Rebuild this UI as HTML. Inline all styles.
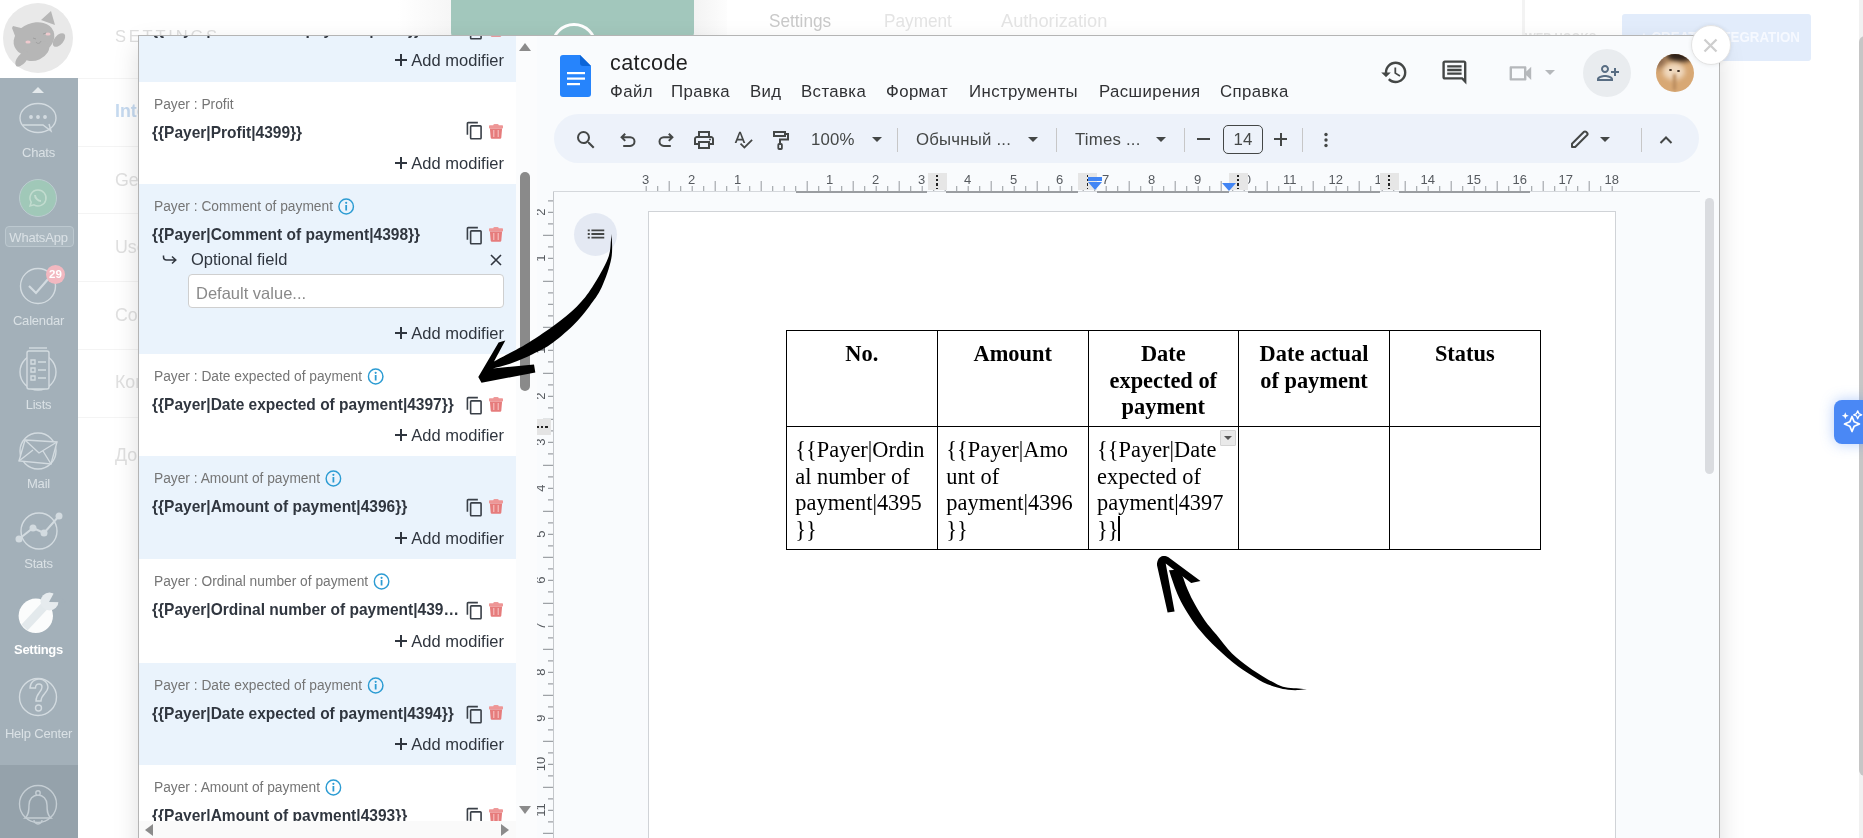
<!DOCTYPE html>
<html lang="en"><head><meta charset="utf-8"><title>catcode</title>
<style>
html,body{margin:0;padding:0}
body{width:1863px;height:838px;overflow:hidden;position:relative;background:#fff;font-family:"Liberation Sans",sans-serif}
.abs{position:absolute}
#side{position:absolute;left:0;top:78px;width:78px;height:760px;background:#a3b0b9}
#side2{position:absolute;left:0;top:765px;width:78px;height:73px;background:#95a2ab}
.sl{position:absolute;left:0;width:77px;text-align:center;color:#dae1e5;font-size:13px;letter-spacing:-.2px;white-space:nowrap;line-height:16px}
#modal{position:absolute;left:138px;top:35px;width:1582px;height:820px;background:#fff;border:1px solid #b4b4b4;box-sizing:border-box;box-shadow:0 10px 24px rgba(0,0,0,.13)}
#left{will-change:transform;position:absolute;left:139px;top:36px;width:377px;height:785px;overflow:hidden;background:#fff}
.row{position:absolute;left:0;width:377px}
.row.b{background:#eaf3fc}
.lab{position:absolute;left:15px;font-size:14px;color:#757575;white-space:nowrap;transform-origin:0 0;transform:scaleX(.983);line-height:16px}
.lab .inf{position:absolute;right:-22px;top:0px}
.code{position:absolute;left:13px;font-size:16.5px;font-weight:bold;color:#30363f;white-space:nowrap;transform-origin:0 0;transform:scaleX(.94);line-height:19px}
.add{position:absolute;right:12px;font-size:16.5px;color:#30363f;white-space:nowrap;bottom:11.5px;line-height:19px}
.add .pl{position:absolute;left:-16px;top:3px}
.cpw{position:absolute;left:326px;top:42.2px}
.trw{position:absolute;left:350.2px;top:42.8px}
.optarrow{position:absolute;left:23px;top:69.5px}
.opt{position:absolute;left:52px;top:66px;font-size:16.5px;color:#30363f;line-height:19px;white-space:nowrap}
.optx{position:absolute;left:351px;top:70px}
.inp{position:absolute;left:49px;top:90px;width:314px;height:32px;border:1px solid #cfcfcf;border-radius:4px;background:#fff}
.inp span{position:absolute;left:7px;top:8.500px;font-size:16.5px;color:#8a8a8a;line-height:19px;white-space:nowrap}
#docs{will-change:transform;position:absolute;left:537px;top:36px;width:1182px;height:802px;background:#f9fbfd;overflow:hidden}
#dw{position:absolute;left:-537px;top:-36px;width:1863px;height:838px}
.ttl{letter-spacing:.37px;font-size:21.6px;color:#1f1f1f;line-height:26px;white-space:nowrap}
.mn{letter-spacing:.4px;top:82px;font-size:16.8px;color:#303134;line-height:20px;white-space:nowrap}
.tt{letter-spacing:.2px;top:130.300px;font-size:16.8px;color:#444746;line-height:20px;white-space:nowrap}
.sep{top:128px;width:1px;height:24px;background:#c7c7c7}
.car{top:137px;width:0;height:0;border-left:5px solid transparent;border-right:5px solid transparent;border-top:5px solid #444746}
.rn{top:172px;width:30px;text-align:center;font-size:13px;color:#565a5f;line-height:16px}
.vn{left:532px;width:18px;height:16px;text-align:center;font-size:13px;color:#565a5f;line-height:16px;transform:rotate(-90deg)}
.cm{top:173px;width:19px;height:17px;background:#e6e6e6}
.cm i{position:absolute;left:8.700px;top:2px;height:14px;width:1.600px;background:repeating-linear-gradient(#222 0 2.200px,transparent 2.200px 4.200px)}
.tri{width:0;height:0;border-left:7px solid transparent;border-right:7px solid transparent;border-top:8px solid #4285f4}
.th{font-family:"Liberation Serif",serif;font-weight:bold;font-size:22.4px;line-height:26.4px;text-align:center;color:#000;white-space:nowrap}
.td{font-family:"Liberation Serif",serif;font-size:22.4px;line-height:26.5px;color:#000;white-space:nowrap}
.fz{font-size:18.5px;color:#c9c9c9;line-height:22px;white-space:nowrap;transform-origin:0 0;transform:scaleX(.93)}
</style></head><body>
<div id="bg" style="position:absolute;left:0;top:0;width:1863px;height:838px;will-change:transform">
<div class="abs" style="left:451px;top:-6px;width:243px;height:44px;border-radius:5px;background:#a2c7bc"></div>
<div class="abs" style="left:551px;top:23px;width:40px;height:40px;border-radius:50%;border:3px solid #fff"></div>
<div class="abs" style="left:398px;top:0;width:53px;height:36px;background:linear-gradient(90deg,#fff,#f6f6f6)"></div>
<div class="abs" style="left:694px;top:0;width:33px;height:36px;background:linear-gradient(90deg,#f3f3f3,#fdfdfd)"></div>
<div class="abs fz" style="left:769px;top:10px">Settings</div>
<div class="abs fz" style="left:884px;top:10px;color:#e4e4e4">Payment</div>
<div class="abs fz" style="left:1001px;top:10px;color:#e4e4e4;transform:scaleX(.985)">Authorization</div>
<div class="abs" style="left:115px;top:27px;font-size:16.500px;letter-spacing:2.800px;color:#dedede">SETTINGS</div>
<div class="abs" style="left:115px;top:100px;font-size:17.800px;color:#c6daf0;line-height:22px;white-space:nowrap;font-weight:bold;">Integrations</div>
<div class="abs" style="left:115px;top:169px;font-size:17.800px;color:#e0e0e0;line-height:22px;white-space:nowrap;">General</div>
<div class="abs" style="left:115px;top:236px;font-size:17.800px;color:#e0e0e0;line-height:22px;white-space:nowrap;">Users</div>
<div class="abs" style="left:115px;top:304px;font-size:17.800px;color:#e0e0e0;line-height:22px;white-space:nowrap;">Contacts</div>
<div class="abs" style="left:115px;top:371px;font-size:17.800px;color:#e0e0e0;line-height:22px;white-space:nowrap;">Конструктор</div>
<div class="abs" style="left:115px;top:444px;font-size:17.800px;color:#e0e0e0;line-height:22px;white-space:nowrap;">Дополнительно</div>
<div class="abs" style="left:78px;top:78px;width:60px;height:1px;background:#f4f4f4"></div>
<div class="abs" style="left:78px;top:146px;width:60px;height:1px;background:#f4f4f4"></div>
<div class="abs" style="left:78px;top:213px;width:60px;height:1px;background:#f4f4f4"></div>
<div class="abs" style="left:78px;top:281px;width:60px;height:1px;background:#f4f4f4"></div>
<div class="abs" style="left:78px;top:349px;width:60px;height:1px;background:#f4f4f4"></div>
<div class="abs" style="left:78px;top:417px;width:60px;height:1px;background:#f4f4f4"></div>
<div class="abs" style="left:1522px;top:0;width:3px;height:36px;background:#f3f3f3"></div>
<div class="abs" style="left:1622px;top:14px;width:189px;height:47px;border-radius:3px;background:#e2ecfb"></div>
<div class="abs" style="left:1640px;top:28.500px;font-size:14.700px;font-weight:bold;color:#f6f9ff;white-space:nowrap;transform-origin:0 0;transform:scaleX(.908);line-height:17px">+ CREATE INTEGRATION</div>
<div class="abs" style="left:1525px;top:29px;font-size:13.500px;font-weight:bold;color:#e6e6e6;white-space:nowrap;transform-origin:0 0;transform:scaleX(.84);line-height:17px">WEB HOOKS</div>
<div id="side"></div><div id="side2"></div>
<div class="abs" style="left:3px;top:3px;width:70px;height:70px;border-radius:50%;background:#e9e9e9"></div>
<svg class="abs" style="left:3px;top:3px" width="70" height="70" viewBox="0 0 70 70"><g fill="#b6b6b6"><ellipse cx="31" cy="36" rx="21" ry="16" transform="rotate(-22 31 36)"/><path d="M9 25l1-2 12 3-8 12zM38 17l10-9 4 14z"/><ellipse cx="33" cy="48" rx="14" ry="9" transform="rotate(-25 33 48)"/><ellipse cx="56" cy="37" rx="8" ry="4.500" transform="rotate(-50 56 37)"/><ellipse cx="19" cy="56" rx="9" ry="4.500" transform="rotate(-50 19 56)"/></g><ellipse cx="25" cy="39" rx="2.600" ry="1.600" fill="#efc9cd"/><ellipse cx="45" cy="31" rx="2.600" ry="1.600" fill="#efc9cd"/><path d="M30 35l3 1M40 31l3-1M33 39c1 2 4 2 5-1" stroke="#999" stroke-width=".8" fill="none"/></svg>
<div class="abs" style="left:32px;top:87px;width:0;height:0;border-left:6px solid transparent;border-right:6px solid transparent;border-bottom:6px solid #e4e9ec"></div>
<svg class="abs" style="left:17px;top:98px" width="42" height="42" viewBox="0 0 42 42" fill="none" stroke="#d3dbe0" stroke-width="1.400"><ellipse cx="21" cy="20" rx="18" ry="14.500"/><path d="M6 27h20l8 6-2-7"/><circle cx="14" cy="19" r="1.200" fill="#d3dbe0"/><circle cx="21" cy="19" r="1.200" fill="#d3dbe0"/><circle cx="28" cy="19" r="1.200" fill="#d3dbe0"/></svg>
<div class="sl" style="top:145px;">Chats</div>
<div class="abs" style="left:19px;top:179px;width:36px;height:36px;border-radius:50%;background:#a0c8b8;border:1.500px solid #bccdd0"></div>
<svg class="abs" style="left:27px;top:187px" width="22" height="22" viewBox="0 0 22 22" fill="none" stroke="#c2dccf" stroke-width="1.500"><path d="M11 3a8 8 0 0 0-6.800 12.200L3 19l4-1.100A8 8 0 1 0 11 3z"/><path d="M8 8c0 3 3 6 6 6" stroke-width="2"/></svg>
<div class="abs" style="left:4.500px;top:226px;width:67px;height:19px;border:1px solid #bcc8cf;border-radius:4px;background:#abb8c0"></div>
<div class="sl" style="top:230px;">WhatsApp</div>
<svg class="abs" style="left:19px;top:267px" width="38" height="38" viewBox="0 0 38 38" fill="none" stroke="#d3dbe0" stroke-width="1.400"><circle cx="19" cy="19" r="17.500"/><path d="M10 19l7 7 13-15" stroke-width="2.200"/></svg>
<div class="abs" style="left:46px;top:265px;width:19px;height:19px;border-radius:50%;background:#f2b8c0;color:#fff;font-size:11.500px;font-weight:bold;text-align:center;line-height:19px">29</div>
<div class="sl" style="top:313px;">Calendar</div>
<svg class="abs" style="left:18px;top:346px" width="40" height="50" viewBox="0 0 40 50" fill="none" stroke="#d3dbe0" stroke-width="1.400"><circle cx="20" cy="26" r="18"/><rect x="9" y="5" width="22" height="38" rx="2" fill="#a3b0b9"/><path d="M11 2h18"/><path d="M13 14h4v4h-4zM13 22h4v4h-4zM13 30h4v4h-4zM20 16h8M20 24h8M20 32h8"/></svg>
<div class="sl" style="top:397px;">Lists</div>
<svg class="abs" style="left:17px;top:430px" width="44" height="42" viewBox="0 0 44 42" fill="none" stroke="#d3dbe0" stroke-width="1.400"><circle cx="21" cy="21" r="18"/><path d="M8 10l32 2-6 22-32-3z" fill="#a3b0b9"/><path d="M8 10l14 13 18-11M2 31l14-11M34 34l-8-13"/></svg>
<div class="sl" style="top:476px;">Mail</div>
<svg class="abs" style="left:14px;top:508px" width="50" height="44" viewBox="0 0 50 44" fill="none" stroke="#d3dbe0" stroke-width="1.400"><circle cx="25" cy="23" r="18"/><path d="M5 31l14-11 11 5 15-17" stroke-width="2"/><circle cx="5" cy="31" r="2.800" fill="#d3dbe0"/><circle cx="19" cy="20" r="2.800" fill="#d3dbe0"/><circle cx="30" cy="25" r="2.800" fill="#d3dbe0"/><circle cx="45" cy="8" r="2.800" fill="#d3dbe0"/></svg>
<div class="sl" style="top:556px;">Stats</div>
<svg class="abs" style="left:0;top:580px" width="78" height="60" viewBox="0 0 78 60"><circle cx="35.800" cy="35.800" r="17.200" fill="#fbfcfc"/><path d="M21.500 44.500L42 22.500l6.500 5.500L27.500 50.500z" fill="#e3e9ec"/><circle cx="49.500" cy="21.500" r="9" fill="#e6ebee"/><path d="M49 22l4.500-12 12 10z" fill="#a3b0b9" transform="rotate(8 49 22)"/></svg>
<div class="sl" style="top:641.5px;color:#fff;font-weight:bold;font-size:13px;letter-spacing:-.3px">Settings</div>
<svg class="abs" style="left:17px;top:674px" width="44" height="46" viewBox="0 0 44 46" fill="none" stroke="#d3dbe0" stroke-width="1.400"><circle cx="21" cy="23" r="18.500"/><path d="M13 14c0-6 5-9 9-9 5 0 9 4 9 8 0 6-7 7-7 14h-5c0-8 6-9 6-14 0-2-1.500-3-3-3-2 0-3.500 1.500-3.500 4z" fill="#a3b0b9"/><circle cx="21.500" cy="34" r="3" fill="#a3b0b9"/></svg>
<div class="sl" style="top:726px;">Help Center</div>
<svg class="abs" style="left:17px;top:780px" width="44" height="50" viewBox="0 0 44 50" fill="none" stroke="#c5ced4" stroke-width="1.400"><circle cx="21" cy="24" r="18.500"/><path d="M8 38c4-3 4-8 4-13 0-6 4-10 9-10s9 4 9 10c0 5 0 10 4 13z" fill="#95a2ab"/><circle cx="21" cy="13" r="2.200" fill="#95a2ab"/><path d="M17 40a4 4 0 0 0 8 0"/></svg>
</div>
<div id="modal"></div>
<div id="left">
<div class="row b" style="top:-57px;height:102.5px"><div class="lab" style="top:14px">Payer : Comment of payment<svg class="inf" viewBox="0 0 17 17" width="17" height="17"><circle cx="8.500" cy="8.500" r="7.400" fill="none" stroke="#2d9cd3" stroke-width="1.500"/><rect x="7.600" y="7" width="1.800" height="5.500" fill="#2d9cd3"/><circle cx="8.500" cy="4.800" r="1.100" fill="#2d9cd3"/></svg></div><div class="code" style="top:41px">{{Payer|Comment of payment|4400}}</div><span class="cpw"><svg class="ic cp" viewBox="0 0 24 24" width="19.3" height="19.3"><path fill="#3a4048" d="M16 1H4c-1.1 0-2 .9-2 2v14h2V3h12V1zm3 4H8c-1.1 0-2 .9-2 2v14c0 1.1.9 2 2 2h11c1.1 0 2-.9 2-2V7c0-1.1-.9-2-2-2zm0 16H8V7h11v14z"/></svg></span><span class="trw"><svg class="ic tr" viewBox="0 0 14 15" width="14" height="15"><rect x="4.300" y="0" width="5.400" height="2.500" rx="1.200" fill="#ee9a9a"/><rect x="0" y="1.300" width="14" height="3.200" rx=".8" fill="#ee9696"/><path d="M.9 4.500h12.200l-.8 9.200a1.200 1.200 0 0 1-1.200 1.100H2.900a1.200 1.200 0 0 1-1.200-1.100z" fill="#e67c7c"/><path d="M4.800 6v7M9.200 6v7" stroke="#f6c4c4" stroke-width="1.100"/></svg></span><div class="add"><svg class="pl" viewBox="0 0 12 12" width="12" height="12"><path d="M6 0v12M0 6h12" stroke="#30363f" stroke-width="2" fill="none"/></svg><span>Add modifier</span></div></div>
<div class="row " style="top:45.5px;height:102.5px"><div class="lab" style="top:14px">Payer : Profit</div><div class="code" style="top:41px">{{Payer|Profit|4399}}</div><span class="cpw" style='margin-top:-2.300px'><svg class="ic cp" viewBox="0 0 24 24" width="19.3" height="19.3"><path fill="#3a4048" d="M16 1H4c-1.1 0-2 .9-2 2v14h2V3h12V1zm3 4H8c-1.1 0-2 .9-2 2v14c0 1.1.9 2 2 2h11c1.1 0 2-.9 2-2V7c0-1.1-.9-2-2-2zm0 16H8V7h11v14z"/></svg></span><span class="trw"><svg class="ic tr" viewBox="0 0 14 15" width="14" height="15"><rect x="4.300" y="0" width="5.400" height="2.500" rx="1.200" fill="#ee9a9a"/><rect x="0" y="1.300" width="14" height="3.200" rx=".8" fill="#ee9696"/><path d="M.9 4.500h12.200l-.8 9.200a1.200 1.200 0 0 1-1.200 1.100H2.900a1.200 1.200 0 0 1-1.200-1.100z" fill="#e67c7c"/><path d="M4.800 6v7M9.200 6v7" stroke="#f6c4c4" stroke-width="1.100"/></svg></span><div class="add"><svg class="pl" viewBox="0 0 12 12" width="12" height="12"><path d="M6 0v12M0 6h12" stroke="#30363f" stroke-width="2" fill="none"/></svg><span>Add modifier</span></div></div>
<div class="row b" style="top:148px;height:170px"><div class="lab" style="top:14px">Payer : Comment of payment<svg class="inf" viewBox="0 0 17 17" width="17" height="17"><circle cx="8.500" cy="8.500" r="7.400" fill="none" stroke="#2d9cd3" stroke-width="1.500"/><rect x="7.600" y="7" width="1.800" height="5.500" fill="#2d9cd3"/><circle cx="8.500" cy="4.800" r="1.100" fill="#2d9cd3"/></svg></div><div class="code" style="top:41px">{{Payer|Comment of payment|4398}}</div><span class="cpw"><svg class="ic cp" viewBox="0 0 24 24" width="19.3" height="19.3"><path fill="#3a4048" d="M16 1H4c-1.1 0-2 .9-2 2v14h2V3h12V1zm3 4H8c-1.1 0-2 .9-2 2v14c0 1.1.9 2 2 2h11c1.1 0 2-.9 2-2V7c0-1.1-.9-2-2-2zm0 16H8V7h11v14z"/></svg></span><span class="trw"><svg class="ic tr" viewBox="0 0 14 15" width="14" height="15"><rect x="4.300" y="0" width="5.400" height="2.500" rx="1.200" fill="#ee9a9a"/><rect x="0" y="1.300" width="14" height="3.200" rx=".8" fill="#ee9696"/><path d="M.9 4.500h12.200l-.8 9.200a1.200 1.200 0 0 1-1.200 1.100H2.900a1.200 1.200 0 0 1-1.200-1.100z" fill="#e67c7c"/><path d="M4.800 6v7M9.200 6v7" stroke="#f6c4c4" stroke-width="1.100"/></svg></span><svg class="optarrow" width="16" height="12" viewBox="0 0 16 12"><path d="M1.500 1.500v1.500a3 3 0 0 0 3 3h9M10 2.500l3.800 3.500-3.800 3.500" fill="none" stroke="#30363f" stroke-width="1.500"/></svg><div class="opt">Optional field</div><svg class="optx" viewBox="0 0 12 12" width="12" height="12"><path d="M1 1l10 10M11 1L1 11" stroke="#30363f" stroke-width="1.6" fill="none"/></svg><div class="inp"><span>Default value...</span></div><div class="add"><svg class="pl" viewBox="0 0 12 12" width="12" height="12"><path d="M6 0v12M0 6h12" stroke="#30363f" stroke-width="2" fill="none"/></svg><span>Add modifier</span></div></div>
<div class="row " style="top:318px;height:102px"><div class="lab" style="top:14px">Payer : Date expected of payment<svg class="inf" viewBox="0 0 17 17" width="17" height="17"><circle cx="8.500" cy="8.500" r="7.400" fill="none" stroke="#2d9cd3" stroke-width="1.500"/><rect x="7.600" y="7" width="1.800" height="5.500" fill="#2d9cd3"/><circle cx="8.500" cy="4.800" r="1.100" fill="#2d9cd3"/></svg></div><div class="code" style="top:41px">{{Payer|Date expected of payment|4397}}</div><span class="cpw"><svg class="ic cp" viewBox="0 0 24 24" width="19.3" height="19.3"><path fill="#3a4048" d="M16 1H4c-1.1 0-2 .9-2 2v14h2V3h12V1zm3 4H8c-1.1 0-2 .9-2 2v14c0 1.1.9 2 2 2h11c1.1 0 2-.9 2-2V7c0-1.1-.9-2-2-2zm0 16H8V7h11v14z"/></svg></span><span class="trw"><svg class="ic tr" viewBox="0 0 14 15" width="14" height="15"><rect x="4.300" y="0" width="5.400" height="2.500" rx="1.200" fill="#ee9a9a"/><rect x="0" y="1.300" width="14" height="3.200" rx=".8" fill="#ee9696"/><path d="M.9 4.500h12.200l-.8 9.200a1.200 1.200 0 0 1-1.200 1.100H2.900a1.200 1.200 0 0 1-1.200-1.100z" fill="#e67c7c"/><path d="M4.800 6v7M9.200 6v7" stroke="#f6c4c4" stroke-width="1.100"/></svg></span><div class="add"><svg class="pl" viewBox="0 0 12 12" width="12" height="12"><path d="M6 0v12M0 6h12" stroke="#30363f" stroke-width="2" fill="none"/></svg><span>Add modifier</span></div></div>
<div class="row b" style="top:420px;height:103px"><div class="lab" style="top:14px">Payer : Amount of payment<svg class="inf" viewBox="0 0 17 17" width="17" height="17"><circle cx="8.500" cy="8.500" r="7.400" fill="none" stroke="#2d9cd3" stroke-width="1.500"/><rect x="7.600" y="7" width="1.800" height="5.500" fill="#2d9cd3"/><circle cx="8.500" cy="4.800" r="1.100" fill="#2d9cd3"/></svg></div><div class="code" style="top:41px">{{Payer|Amount of payment|4396}}</div><span class="cpw"><svg class="ic cp" viewBox="0 0 24 24" width="19.3" height="19.3"><path fill="#3a4048" d="M16 1H4c-1.1 0-2 .9-2 2v14h2V3h12V1zm3 4H8c-1.1 0-2 .9-2 2v14c0 1.1.9 2 2 2h11c1.1 0 2-.9 2-2V7c0-1.1-.9-2-2-2zm0 16H8V7h11v14z"/></svg></span><span class="trw"><svg class="ic tr" viewBox="0 0 14 15" width="14" height="15"><rect x="4.300" y="0" width="5.400" height="2.500" rx="1.200" fill="#ee9a9a"/><rect x="0" y="1.300" width="14" height="3.200" rx=".8" fill="#ee9696"/><path d="M.9 4.500h12.200l-.8 9.200a1.200 1.200 0 0 1-1.200 1.100H2.900a1.200 1.200 0 0 1-1.200-1.100z" fill="#e67c7c"/><path d="M4.800 6v7M9.200 6v7" stroke="#f6c4c4" stroke-width="1.100"/></svg></span><div class="add"><svg class="pl" viewBox="0 0 12 12" width="12" height="12"><path d="M6 0v12M0 6h12" stroke="#30363f" stroke-width="2" fill="none"/></svg><span>Add modifier</span></div></div>
<div class="row " style="top:523px;height:103.5px"><div class="lab" style="top:14px">Payer : Ordinal number of payment<svg class="inf" viewBox="0 0 17 17" width="17" height="17"><circle cx="8.500" cy="8.500" r="7.400" fill="none" stroke="#2d9cd3" stroke-width="1.500"/><rect x="7.600" y="7" width="1.800" height="5.500" fill="#2d9cd3"/><circle cx="8.500" cy="4.800" r="1.100" fill="#2d9cd3"/></svg></div><div class="code" style="top:41px">{{Payer|Ordinal number of payment|439…</div><span class="cpw"><svg class="ic cp" viewBox="0 0 24 24" width="19.3" height="19.3"><path fill="#3a4048" d="M16 1H4c-1.1 0-2 .9-2 2v14h2V3h12V1zm3 4H8c-1.1 0-2 .9-2 2v14c0 1.1.9 2 2 2h11c1.1 0 2-.9 2-2V7c0-1.1-.9-2-2-2zm0 16H8V7h11v14z"/></svg></span><span class="trw"><svg class="ic tr" viewBox="0 0 14 15" width="14" height="15"><rect x="4.300" y="0" width="5.400" height="2.500" rx="1.200" fill="#ee9a9a"/><rect x="0" y="1.300" width="14" height="3.200" rx=".8" fill="#ee9696"/><path d="M.9 4.500h12.200l-.8 9.200a1.200 1.200 0 0 1-1.200 1.100H2.900a1.200 1.200 0 0 1-1.200-1.100z" fill="#e67c7c"/><path d="M4.800 6v7M9.200 6v7" stroke="#f6c4c4" stroke-width="1.100"/></svg></span><div class="add"><svg class="pl" viewBox="0 0 12 12" width="12" height="12"><path d="M6 0v12M0 6h12" stroke="#30363f" stroke-width="2" fill="none"/></svg><span>Add modifier</span></div></div>
<div class="row b" style="top:626.5px;height:102.5px"><div class="lab" style="top:14px">Payer : Date expected of payment<svg class="inf" viewBox="0 0 17 17" width="17" height="17"><circle cx="8.500" cy="8.500" r="7.400" fill="none" stroke="#2d9cd3" stroke-width="1.500"/><rect x="7.600" y="7" width="1.800" height="5.500" fill="#2d9cd3"/><circle cx="8.500" cy="4.800" r="1.100" fill="#2d9cd3"/></svg></div><div class="code" style="top:41px">{{Payer|Date expected of payment|4394}}</div><span class="cpw"><svg class="ic cp" viewBox="0 0 24 24" width="19.3" height="19.3"><path fill="#3a4048" d="M16 1H4c-1.1 0-2 .9-2 2v14h2V3h12V1zm3 4H8c-1.1 0-2 .9-2 2v14c0 1.1.9 2 2 2h11c1.1 0 2-.9 2-2V7c0-1.1-.9-2-2-2zm0 16H8V7h11v14z"/></svg></span><span class="trw"><svg class="ic tr" viewBox="0 0 14 15" width="14" height="15"><rect x="4.300" y="0" width="5.400" height="2.500" rx="1.200" fill="#ee9a9a"/><rect x="0" y="1.300" width="14" height="3.200" rx=".8" fill="#ee9696"/><path d="M.9 4.500h12.200l-.8 9.200a1.200 1.200 0 0 1-1.200 1.100H2.900a1.200 1.200 0 0 1-1.200-1.100z" fill="#e67c7c"/><path d="M4.800 6v7M9.200 6v7" stroke="#f6c4c4" stroke-width="1.100"/></svg></span><div class="add"><svg class="pl" viewBox="0 0 12 12" width="12" height="12"><path d="M6 0v12M0 6h12" stroke="#30363f" stroke-width="2" fill="none"/></svg><span>Add modifier</span></div></div>
<div class="row " style="top:729px;height:102.5px"><div class="lab" style="top:14px">Payer : Amount of payment<svg class="inf" viewBox="0 0 17 17" width="17" height="17"><circle cx="8.500" cy="8.500" r="7.400" fill="none" stroke="#2d9cd3" stroke-width="1.500"/><rect x="7.600" y="7" width="1.800" height="5.500" fill="#2d9cd3"/><circle cx="8.500" cy="4.800" r="1.100" fill="#2d9cd3"/></svg></div><div class="code" style="top:41px">{{Payer|Amount of payment|4393}}</div><span class="cpw"><svg class="ic cp" viewBox="0 0 24 24" width="19.3" height="19.3"><path fill="#3a4048" d="M16 1H4c-1.1 0-2 .9-2 2v14h2V3h12V1zm3 4H8c-1.1 0-2 .9-2 2v14c0 1.1.9 2 2 2h11c1.1 0 2-.9 2-2V7c0-1.1-.9-2-2-2zm0 16H8V7h11v14z"/></svg></span><span class="trw"><svg class="ic tr" viewBox="0 0 14 15" width="14" height="15"><rect x="4.300" y="0" width="5.400" height="2.500" rx="1.200" fill="#ee9a9a"/><rect x="0" y="1.300" width="14" height="3.200" rx=".8" fill="#ee9696"/><path d="M.9 4.500h12.200l-.8 9.200a1.200 1.200 0 0 1-1.200 1.100H2.900a1.200 1.200 0 0 1-1.200-1.100z" fill="#e67c7c"/><path d="M4.800 6v7M9.200 6v7" stroke="#f6c4c4" stroke-width="1.100"/></svg></span><div class="add"><svg class="pl" viewBox="0 0 12 12" width="12" height="12"><path d="M6 0v12M0 6h12" stroke="#30363f" stroke-width="2" fill="none"/></svg><span>Add modifier</span></div></div>
</div>
<div class="abs" style="left:516px;top:36px;width:21px;height:802px;background:#fbfcfd"></div>
<div class="abs" style="left:519px;top:43px;width:0;height:0;border-left:6px solid transparent;border-right:6px solid transparent;border-bottom:8px solid #8b8b8b"></div>
<div class="abs" style="left:519px;top:806px;width:0;height:0;border-left:6px solid transparent;border-right:6px solid transparent;border-top:8px solid #8b8b8b"></div>
<div class="abs" style="left:520px;top:172px;width:10px;height:219px;border-radius:5px;background:#8a8a8a"></div>
<div class="abs" style="left:139px;top:821px;width:377px;height:17px;background:#fafafa"></div>
<div class="abs" style="left:145px;top:824px;width:0;height:0;border-top:6px solid transparent;border-bottom:6px solid transparent;border-right:8px solid #8b8b8b"></div>
<div class="abs" style="left:501px;top:824px;width:0;height:0;border-top:6px solid transparent;border-bottom:6px solid transparent;border-left:8px solid #8b8b8b"></div>
<div id="docs"><div id="dw">
<svg class="abs" style="left:560px;top:55px" width="31" height="42" viewBox="0 0 31 42"><path d="M3 0h17l11 11v28a3 3 0 0 1-3 3H3a3 3 0 0 1-3-3V3a3 3 0 0 1 3-3z" fill="#2684fc"/><path d="M20 0l11 11H23a3 3 0 0 1-3-3z" fill="#0b65d8"/><rect x="7" y="17" width="18" height="2.2" fill="#fff"/><rect x="7" y="22.5" width="18" height="2.2" fill="#fff"/><rect x="7" y="28" width="13" height="2.2" fill="#fff"/></svg>
<div class="abs ttl" style="left:610px;top:50px">catcode</div>
<div class="abs mn" style="left:610px">Файл</div>
<div class="abs mn" style="left:671px">Правка</div>
<div class="abs mn" style="left:750px">Вид</div>
<div class="abs mn" style="left:801px">Вставка</div>
<div class="abs mn" style="left:886px">Формат</div>
<div class="abs mn" style="left:969px">Инструменты</div>
<div class="abs mn" style="left:1099px">Расширения</div>
<div class="abs mn" style="left:1220px">Справка</div>
<div class="abs" id="tb" style="left:554px;top:114px;width:1145px;height:49px;border-radius:25px;background:#edf2fa"></div>
<div class="abs tt" style="left:811px">100%</div>
<div class="abs tt" style="left:916px">Обычный ...</div>
<div class="abs tt" style="left:1075px">Times ...</div>
<div class="abs sep" style="left:897px"></div>
<div class="abs sep" style="left:1056px"></div>
<div class="abs sep" style="left:1184px"></div>
<div class="abs sep" style="left:1302px"></div>
<div class="abs sep" style="left:1641px"></div>
<div class="abs car" style="left:872px"></div>
<div class="abs car" style="left:1028px"></div>
<div class="abs car" style="left:1156px"></div>
<div class="abs car" style="left:1600px"></div>
<div class="abs" style="left:1223px;top:125px;width:38px;height:27px;border:1px solid #444746;border-radius:5px"></div>
<div class="abs tt" style="left:1223px;width:40px;text-align:center">14</div>
<svg class="abs" style="left:574.0px;top:127.5px" width="24" height="24" viewBox="0 0 24 24" ><path fill="#444746" d="M15.5 14h-.79l-.28-.27A6.471 6.471 0 0 0 16 9.5 6.5 6.5 0 1 0 9.5 16c1.61 0 3.09-.59 4.23-1.57l.27.28v.79l5 4.99L20.49 19l-4.99-5zm-6 0C7.01 14 5 11.99 5 9.5S7.01 5 9.5 5 14 7.01 14 9.5 11.99 14 9.5 14z"/></svg>
<svg class="abs" style="left:616.0px;top:128.0px" width="24" height="24" viewBox="0 0 24 24" ><path fill="none" stroke="#444746" stroke-width="2" d="M9.2 5.7L5.6 9.3l3.6 3.6M5.6 9.3h8.6a4.3 4.3 0 0 1 0 8.600H7.2"/></svg>
<svg class="abs" style="left:654.0px;top:128.0px" width="24" height="24" viewBox="0 0 24 24" ><path fill="none" stroke="#444746" stroke-width="2" d="M14.8 5.7l3.6 3.6-3.6 3.6M18.400 9.300H9.800a4.300 4.300 0 0 0 0 8.600h7"/></svg>
<svg class="abs" style="left:692.0px;top:127.5px" width="24" height="24" viewBox="0 0 24 24" ><path fill="#444746" d="M19 8h-1V3H6v5H5c-1.660 0-3 1.340-3 3v6h4v4h12v-4h4v-6c0-1.660-1.340-3-3-3zM8 5h8v3H8V5zm8 14H8v-4h8v4zm2-4v-2H6v2H4v-4c0-.550.450-1 1-1h14c.550 0 1 .450 1 1v4h-2z"/><circle cx="18" cy="11.5" r="1" fill="#444746"/></svg>
<svg class="abs" style="left:731.0px;top:127.5px" width="24" height="24" viewBox="0 0 24 24" ><path fill="#444746" d="M12.450 16h2.090L9.430 3H7.570L2.460 16h2.090l1.120-3h5.640l1.140 3zm-6.020-5L8.500 5.480 10.570 11H6.430zm15.160.590l-8.090 8.090L9.830 16l-1.410 1.410 5.090 5.090L23 13l-1.410-1.410z" transform="translate(1.5,1) scale(.88)"/></svg>
<svg class="abs" style="left:768.0px;top:128.0px" width="24" height="24" viewBox="0 0 24 24" ><path fill="none" stroke="#444746" stroke-width="2" d="M6 4h11v4H6zM17 6h3v5.500h-8V16"/><rect x="10.300" y="16" width="3.600" height="5" rx=".8" fill="none" stroke="#444746" stroke-width="1.800"/></svg>
<div class="abs" style="left:1197px;top:138px;width:13px;height:2px;background:#444746"></div>
<div class="abs" style="left:1274px;top:138px;width:13px;height:2px;background:#444746"></div><div class="abs" style="left:1279.5px;top:132.5px;width:2px;height:13px;background:#444746"></div>
<svg class="abs" style="left:1313.5px;top:127.5px" width="24" height="24" viewBox="0 0 24 24" ><circle cx="12" cy="6.5" r="1.7" fill="#444746"/><circle cx="12" cy="12" r="1.7" fill="#444746"/><circle cx="12" cy="17.5" r="1.7" fill="#444746"/></svg>
<svg class="abs" style="left:1567.5px;top:127.0px" width="24" height="24" viewBox="0 0 24 24" ><path fill="none" stroke="#444746" stroke-width="2" stroke-linejoin="round" d="M4 20v-3.200L16 4.800a1.400 1.400 0 0 1 2 0l1.200 1.200a1.400 1.400 0 0 1 0 2L7.200 20z"/></svg>
<svg class="abs" style="left:1653.5px;top:128.0px" width="24" height="24" viewBox="0 0 24 24" ><path fill="none" stroke="#444746" stroke-width="2" d="M6.500 15l5.500-5.500 5.500 5.500"/></svg>
<svg class="abs" style="left:1379.6px;top:57.6px" width="28.8" height="28.8" viewBox="0 0 24 24" ><path fill="#444746" d="M13 3a9 9 0 0 0-9 9H1l3.890 3.890.070.140L9 12H6c0-3.870 3.130-7 7-7s7 3.130 7 7-3.130 7-7 7c-1.930 0-3.680-.790-4.940-2.060l-1.420 1.420A8.954 8.954 0 0 0 13 21a9 9 0 0 0 0-18zm-1 5v5l4.280 2.540.72-1.210-3.500-2.080V8H12z"/></svg>
<svg class="abs" style="left:1439.6px;top:58.1px" width="28.8" height="28.8" viewBox="0 0 24 24" ><path fill="#444746" d="M21.990 4c0-1.100-.890-2-1.990-2H4c-1.100 0-2 .900-2 2v12c0 1.100.900 2 2 2h14l4 4-.010-18zM20 4v13.170L18.830 16H4V4h16zM6 12h12v2H6zm0-3h12v2H6zm0-3h12v2H6z"/></svg>
<svg class="abs" style="left:1505.6px;top:58.6px" width="28.8" height="28.8" viewBox="0 0 24 24" ><path fill="#b5b8bb" d="M15 8v8H5V8h10m1-2H4c-.550 0-1 .450-1 1v10c0 .550.450 1 1 1h12c.550 0 1-.450 1-1v-3.500l4 4v-11l-4 4V7c0-.550-.450-1-1-1z"/></svg>
<div class="abs" style="left:1545px;top:70px;width:0;height:0;border-left:5px solid transparent;border-right:5px solid transparent;border-top:5px solid #b5b8bb"></div>
<div class="abs" style="left:1583px;top:48.5px;width:48px;height:48px;border-radius:50%;background:#e9ecef"></div>
<svg class="abs" style="left:1595.5px;top:60.5px" width="24" height="24" viewBox="0 0 24 24" ><path fill="#586d83" transform="translate(24,0) scale(-1,1)" d="M15 12c2.210 0 4-1.790 4-4s-1.790-4-4-4-4 1.790-4 4 1.790 4 4 4zm0-6c1.100 0 2 .900 2 2s-.900 2-2 2-2-.900-2-2 .900-2 2-2zm0 8c-2.670 0-8 1.340-8 4v2h16v-2c0-2.660-5.330-4-8-4zm-6 4c.220-.720 3.310-2 6-2 2.700 0 5.800 1.290 6 2H9zm-3-3v-3h3v-2H6V7H4v3H1v2h3v3z"/></svg>
<div class="abs" id="ava" style="left:1656px;top:53.500px;width:38.400px;height:38.400px;border-radius:50%;overflow:hidden;background:#d8a874"><div style="position:absolute;left:9px;top:-7px;width:30px;height:15px;border-radius:50%;background:#2e2119;filter:blur(2.500px)"></div><div style="position:absolute;left:-5px;top:-2px;width:16px;height:16px;border-radius:50%;background:#8c6a50;filter:blur(3px)"></div><div style="position:absolute;left:7px;top:9px;width:22px;height:17px;border-radius:50%;background:#f0d9bf;filter:blur(2.500px)"></div><div style="position:absolute;left:13px;top:15.500px;width:3px;height:2px;background:#3a2a20;border-radius:50%"></div><div style="position:absolute;left:20.500px;top:16.500px;width:3px;height:2px;background:#3a2a20;border-radius:50%"></div><div style="position:absolute;left:17px;top:20px;width:3px;height:16px;background:#b88a5c;filter:blur(1.500px)"></div></div>
<div class="abs" style="left:553px;top:191px;width:1147px;height:1px;background:#d5d8dc"></div>
<div class="abs" style="left:796px;top:190.5px;width:131px;height:2px;background:#9a9da1"></div>
<div class="abs" style="left:946px;top:190.5px;width:132px;height:2px;background:#9a9da1"></div>
<div class="abs" style="left:1097px;top:190.5px;width:132px;height:2px;background:#9a9da1"></div>
<div class="abs" style="left:1248px;top:190.5px;width:132px;height:2px;background:#9a9da1"></div>
<div class="abs" style="left:1399px;top:190.5px;width:131px;height:2px;background:#9a9da1"></div>
<svg class="abs" style="left:0;top:0" width="1863" height="200"><path d="M646.2 191v-5M657.7 191v-5M669.2 191v-10M680.7 191v-5M692.2 191v-5M703.7 191v-5M715.2 191v-10M726.7 191v-5M738.2 191v-5M749.7 191v-5M761.2 191v-10M772.7 191v-5M784.2 191v-5M795.7 191v-5M807.2 191v-10M818.7 191v-5M830.2 191v-5M841.7 191v-5M853.2 191v-10M864.7 191v-5M876.2 191v-5M887.7 191v-5M899.2 191v-10M910.7 191v-5M922.2 191v-5M933.7 191v-5M945.2 191v-10M956.7 191v-5M968.2 191v-5M979.7 191v-5M991.2 191v-10M1002.7 191v-5M1014.2 191v-5M1025.7 191v-5M1037.2 191v-10M1048.7 191v-5M1060.2 191v-5M1071.7 191v-5M1083.2 191v-10M1094.7 191v-5M1106.2 191v-5M1117.7 191v-5M1129.2 191v-10M1140.7 191v-5M1152.2 191v-5M1163.7 191v-5M1175.2 191v-10M1186.7 191v-5M1198.2 191v-5M1209.7 191v-5M1221.2 191v-10M1232.7 191v-5M1244.2 191v-5M1255.7 191v-5M1267.2 191v-10M1278.7 191v-5M1290.2 191v-5M1301.7 191v-5M1313.2 191v-10M1324.7 191v-5M1336.2 191v-5M1347.7 191v-5M1359.2 191v-10M1370.7 191v-5M1382.2 191v-5M1393.7 191v-5M1405.2 191v-10M1416.7 191v-5M1428.2 191v-5M1439.7 191v-5M1451.2 191v-10M1462.7 191v-5M1474.2 191v-5M1485.7 191v-5M1497.2 191v-10M1508.7 191v-5M1520.2 191v-5M1531.7 191v-5M1543.2 191v-10M1554.7 191v-5M1566.2 191v-5M1577.7 191v-5M1589.2 191v-10M1600.7 191v-5M1612.2 191v-5" stroke="#9ea2a7" stroke-width="1.1" fill="none"/></svg>
<div class="abs rn" style="left:630.7px">3</div>
<div class="abs rn" style="left:676.7px">2</div>
<div class="abs rn" style="left:722.7px">1</div>
<div class="abs rn" style="left:814.7px">1</div>
<div class="abs rn" style="left:860.7px">2</div>
<div class="abs rn" style="left:906.7px">3</div>
<div class="abs rn" style="left:952.7px">4</div>
<div class="abs rn" style="left:998.7px">5</div>
<div class="abs rn" style="left:1044.7px">6</div>
<div class="abs rn" style="left:1090.7px">7</div>
<div class="abs rn" style="left:1136.7px">8</div>
<div class="abs rn" style="left:1182.7px">9</div>
<div class="abs rn" style="left:1228.7px">10</div>
<div class="abs rn" style="left:1274.7px">11</div>
<div class="abs rn" style="left:1320.7px">12</div>
<div class="abs rn" style="left:1366.7px">13</div>
<div class="abs rn" style="left:1412.7px">14</div>
<div class="abs rn" style="left:1458.7px">15</div>
<div class="abs rn" style="left:1504.7px">16</div>
<div class="abs rn" style="left:1550.7px">17</div>
<div class="abs rn" style="left:1596.7px">18</div>
<div class="abs cm" style="left:927.5px"><i></i></div>
<div class="abs cm" style="left:1078.0px"><i></i></div>
<div class="abs cm" style="left:1228.5px"><i></i></div>
<div class="abs cm" style="left:1379.5px"><i></i></div>
<div class="abs" style="left:1088px;top:176.5px;width:14px;height:4px;background:#4285f4"></div>
<div class="abs tri" style="left:1088px;top:182px"></div>
<div class="abs tri" style="left:1221.5px;top:182.5px"></div>
<div class="abs" style="left:553px;top:192px;width:1px;height:646px;background:#c4c7cb"></div>
<svg class="abs" style="left:0;top:0" width="600" height="838"><path d="M553 200.9h-5M553 212.4h-5M553 223.9h-5M553 235.4h-10M553 246.9h-5M553 258.4h-5M553 269.9h-5M553 281.4h-10M553 292.9h-5M553 304.4h-5M553 315.9h-5M553 327.4h-10M553 338.9h-5M553 350.4h-5M553 361.9h-5M553 373.4h-10M553 384.9h-5M553 396.4h-5M553 407.9h-5M553 419.4h-10M553 430.9h-5M553 442.4h-5M553 453.9h-5M553 465.4h-10M553 476.9h-5M553 488.4h-5M553 499.9h-5M553 511.4h-10M553 522.9h-5M553 534.4h-5M553 545.9h-5M553 557.4h-10M553 568.9h-5M553 580.4h-5M553 591.9h-5M553 603.4h-10M553 614.9h-5M553 626.4h-5M553 637.9h-5M553 649.4h-10M553 660.9h-5M553 672.4h-5M553 683.9h-5M553 695.4h-10M553 706.9h-5M553 718.4h-5M553 729.9h-5M553 741.4h-10M553 752.9h-5M553 764.4h-5M553 775.9h-5M553 787.4h-10M553 798.9h-5M553 810.4h-5M553 821.9h-5M553 833.4h-10M553 844.9h-5" stroke="#9ea2a7" stroke-width="1.1" fill="none"/></svg>
<div class="abs vn" style="top:204.4px">2</div>
<div class="abs vn" style="top:250.4px">1</div>
<div class="abs vn" style="top:342.4px">1</div>
<div class="abs vn" style="top:388.4px">2</div>
<div class="abs vn" style="top:434.4px">3</div>
<div class="abs vn" style="top:480.4px">4</div>
<div class="abs vn" style="top:526.4px">5</div>
<div class="abs vn" style="top:572.4px">6</div>
<div class="abs vn" style="top:618.4px">7</div>
<div class="abs vn" style="top:664.4px">8</div>
<div class="abs vn" style="top:710.4px">9</div>
<div class="abs vn" style="top:756.4px">10</div>
<div class="abs vn" style="top:802.4px">11</div>
<div class="abs" style="left:534.5px;top:419px;width:16px;height:15.5px;background:#e4e4e4"><i style="position:absolute;left:2px;top:7px;width:13px;height:1.600px;background:repeating-linear-gradient(90deg,#222 0 2.200px,transparent 2.200px 4.200px)"></i></div>
<div class="abs" style="left:574px;top:212.5px;width:43px;height:43px;border-radius:50%;background:#e4e9f3"></div>
<svg class="abs" style="left:584.5px;top:222.5px" width="22" height="22" viewBox="0 0 24 24"><path fill="#444746" d="M3 7.500h2.200v2H3zm0 4h2.200v2H3zm0 4h2.200v2H3zM7 7.500h14v2H7zm0 4h14v2H7zm0 4h14v2H7z" transform="translate(0,-.5)"/></svg>
<div class="abs" id="page" style="left:648px;top:211px;width:966px;height:640px;background:#fff;border:1px solid #d0d3d7"></div>
<div class="abs" style="left:1705px;top:198px;width:9px;height:276px;border-radius:5px;background:#dadce0"></div>
<div class="abs" style="box-sizing:border-box;left:785.8px;top:330px;width:754.8px;height:219.5px;border:1px solid #000"></div>
<div class="abs" style="left:785.8px;top:426px;width:753.8px;height:1px;background:#000"></div>
<div class="abs" style="left:936.8px;top:330px;width:1px;height:218.5px;background:#000"></div>
<div class="abs" style="left:1087.6px;top:330px;width:1px;height:218.5px;background:#000"></div>
<div class="abs" style="left:1238px;top:330px;width:1px;height:218.5px;background:#000"></div>
<div class="abs" style="left:1389px;top:330px;width:1px;height:218.5px;background:#000"></div>
<div class="abs th" style="left:786.8px;top:341.2px;width:150.0px">No.</div>
<div class="abs th" style="left:937.8px;top:341.2px;width:149.79999999999995px">Amount</div>
<div class="abs th" style="left:1088.6px;top:341.2px;width:149.4000000000001px">Date<br>expected of<br>payment</div>
<div class="abs th" style="left:1239px;top:341.2px;width:150px">Date actual<br>of payment</div>
<div class="abs th" style="left:1390px;top:341.2px;width:149.5999999999999px">Status</div>
<div class="abs td" style="left:795.3px;top:437.4px">{{Payer|Ordin<br>al number of<br>payment|4395<br>}}</div>
<div class="abs td" style="left:946.3px;top:437.4px">{{Payer|Amo<br>unt of<br>payment|4396<br>}}</div>
<div class="abs td" style="left:1097.1px;top:437.4px">{{Payer|Date<br>expected of<br>payment|4397<br>}}</div>
<div class="abs" style="left:1118px;top:515.5px;width:1.5px;height:25px;background:#000"></div>
<div class="abs" style="left:1220px;top:430px;width:14px;height:14px;background:#e9e9e9;border:1px solid #d4d4d4;border-radius:1px"><i style="position:absolute;left:3px;top:5px;width:0;height:0;border-left:4px solid transparent;border-right:4px solid transparent;border-top:4px solid #555"></i></div>
</div></div>
<svg class="abs" style="left:0;top:0" width="1863" height="838" viewBox="0 0 1863 838"><path d="M611.7 233.8C611.6 237.9 613.0 249.7 611.3 258.6C609.6 267.5 605.4 279.3 601.7 287.3C598.0 295.3 594.1 300.0 589.3 306.4C584.5 312.8 579.5 319.1 573.0 325.5C566.5 331.9 556.9 339.9 550.2 344.6C543.5 349.4 539.4 350.9 533.0 354.0C526.6 357.1 518.8 360.6 512.0 363.0C505.2 365.4 495.8 367.6 492.5 368.5L534.0 364.6L535.3 372.4L481.5 382.8L478.3 377.0L498.6 342.6L505.3 340.4L494.0 361.5C496.3 360.2 502.8 356.8 508.0 354.0C513.2 351.2 517.7 349.4 525.4 344.6C533.1 339.9 545.4 331.9 554.0 325.5C562.6 319.1 570.5 312.8 576.9 306.4C583.3 300.0 587.0 295.3 592.2 287.3C597.4 279.3 604.8 266.5 607.9 258.6C611.0 250.7 610.4 244.1 611.0 240.0C611.6 235.9 611.6 234.8 611.7 233.8Z" fill="#000"/><path d="M1306.8 689.1C1305.5 689.0 1301.8 688.6 1298.7 688.4C1295.6 688.2 1291.6 688.5 1288.0 687.8C1284.4 687.1 1281.5 686.3 1277.3 684.4C1273.1 682.5 1267.8 679.4 1263.0 676.5C1258.2 673.6 1253.8 670.8 1248.6 667.0C1243.4 663.2 1237.4 658.9 1232.0 653.5C1226.6 648.1 1220.8 639.9 1216.3 634.5C1211.8 629.1 1208.7 625.8 1205.2 620.9C1201.7 616.0 1198.2 610.4 1195.3 605.1C1192.4 599.9 1189.9 594.7 1187.6 589.4C1185.3 584.1 1183.1 576.8 1181.5 573.5C1179.9 570.2 1178.8 570.3 1178.2 569.7L1169.0 570.3C1170.1 573.5 1173.3 583.6 1175.6 589.4C1177.9 595.2 1179.9 599.9 1182.8 605.1C1185.7 610.4 1189.3 616.1 1192.7 620.9C1196.1 625.7 1199.3 629.6 1203.1 634.0C1206.9 638.4 1210.4 642.2 1215.6 647.1C1220.8 652.0 1228.8 659.2 1234.3 663.6C1239.8 668.0 1243.8 670.5 1248.6 673.6C1253.4 676.7 1258.2 679.9 1263.0 682.2C1267.8 684.5 1273.1 686.3 1277.3 687.6C1281.5 688.9 1284.4 689.4 1288.0 689.8C1291.6 690.2 1295.6 690.2 1298.7 690.1C1301.8 690.0 1305.5 689.3 1306.8 689.1Z" fill="#000"/><path d="M1167.6 612.5L1157 565.3C1156.8 560 1159.5 556.5 1163 556 C1165 555.8 1167 556.3 1168.1 557L1200.5 581.1L1191.2 582.9L1165.7 563.5L1174.6 611.6Z" fill="#000"/></svg>
<div class="abs" style="left:1690.500px;top:24.500px;width:38.500px;height:38.500px;border-radius:50%;background:#fff;border:1px solid #e3e3e3;box-shadow:0 0 4px rgba(0,0,0,.08)"></div>
<svg class="abs" style="left:1702.500px;top:37.500px" width="15" height="15" viewBox="0 0 15 15"><path d="M1.500 1.500l12 12M13.500 1.500l-12 12" stroke="#cecece" stroke-width="2.300" fill="none"/></svg>
<div class="abs" style="left:1859px;top:0;width:5px;height:838px;background:#f1f1f1"></div>
<div class="abs" style="left:1859px;top:36px;width:12px;height:740px;border-radius:6px;background:#c6c6c6"></div>
<div class="abs" style="left:1834px;top:400px;width:40px;height:44px;border-radius:8px;background:#4a88f5;box-shadow:0 0 14px rgba(74,136,245,.4)"></div>
<svg class="abs" style="left:1838px;top:406px" width="26" height="30" viewBox="0 0 26 30"><path d="M14 10.500l2.200 5.300 5.300 2.200-5.300 2.200-2.200 5.300-2.200-5.300-5.300-2.200 5.300-2.200z" fill="none" stroke="#fff" stroke-width="1.700" stroke-linejoin="round"/><path d="M7.300 6.300l1 2.500 2.500 1-2.500 1-1 2.500-1-2.500-2.500-1 2.500-1z" fill="#fff"/><path d="M19.700 4.800l1.200 2.800 2.800 1.200-2.800 1.200-1.200 2.800-1.200-2.800-2.800-1.200 2.800-1.200z" fill="none" stroke="#fff" stroke-width="1.300" stroke-linejoin="round"/></svg>
</body></html>
